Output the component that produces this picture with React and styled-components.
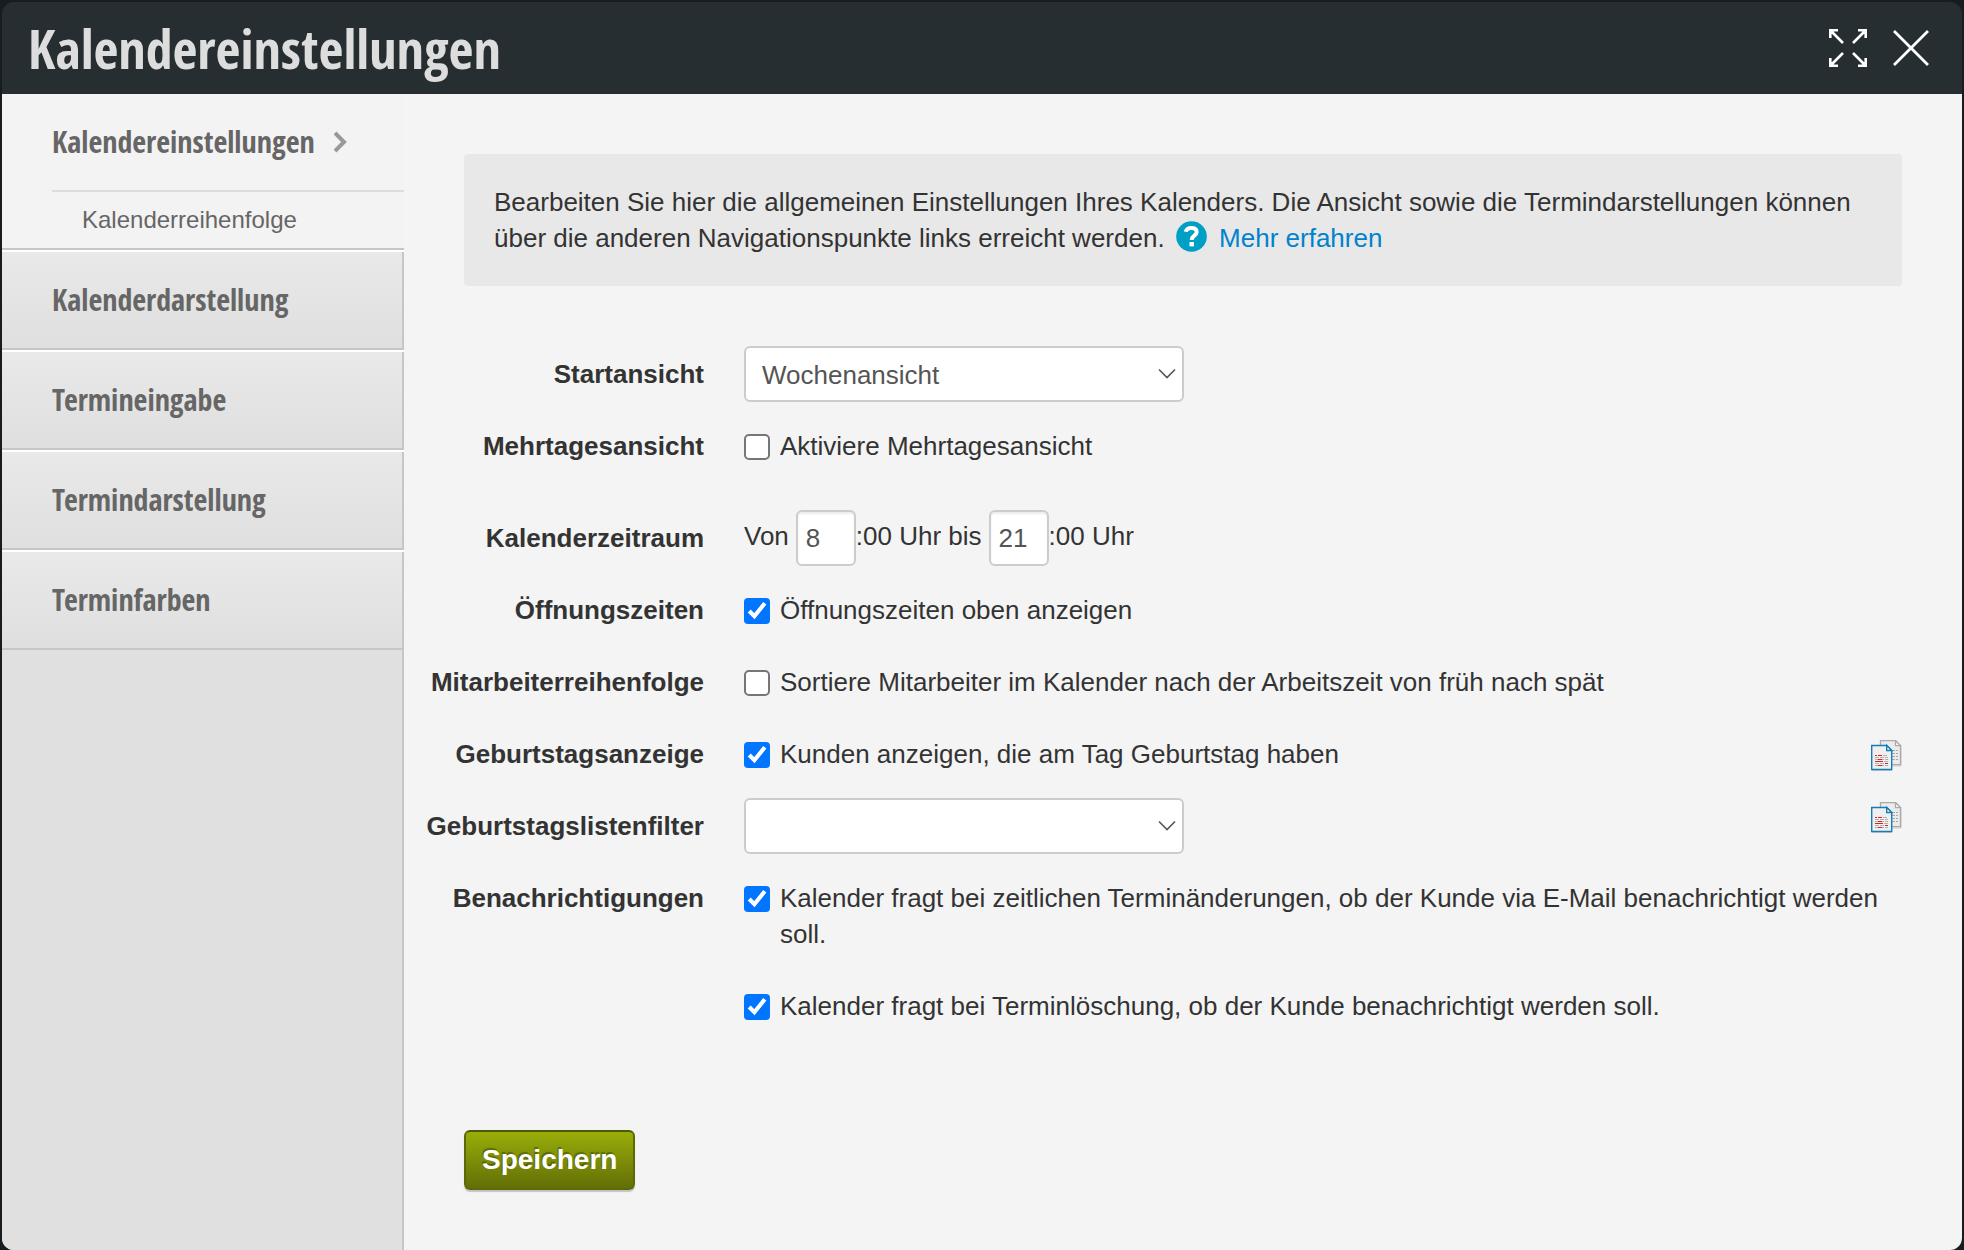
import React from "react";
import styled, { createGlobalStyle, css } from "styled-components";

const GlobalStyle = createGlobalStyle`
  * { box-sizing: border-box; }
  body {
    margin: 0;
    background: #161c1f;
    color: #333;
    font: 26px/36px "Liberation Sans", Arial, sans-serif;
  }
`;

const condensed = css`
  font-family: "Open Sans Condensed", "Liberation Sans Narrow", "Open Sans", sans-serif;
  font-weight: 700;
`;

const Dialog = styled.section`
  display: flex;
  flex-direction: column;
  min-height: 100vh;
  padding: 2px 2px 0;
`;

const Header = styled.header`
  display: flex;
  align-items: center;
  justify-content: space-between;
  height: 92px;
  padding: 0 32px 0 26px;
  border-radius: 12px 12px 0 0;
  background: #262e31;
`;

const Title = styled.h1`
  ${condensed}
  margin: 0;
  color: #ddd;
  font-size: 54px;
  line-height: 92px;
`;

const HeaderActions = styled.div`
  display: flex;
  align-items: center;
  gap: 24px;
`;

const IconButton = styled.button`
  display: flex;
  padding: 0;
  border: 0;
  background: none;
  color: #fff;
  cursor: pointer;
`;

const Body = styled.div`
  display: flex;
  flex: 1;
  overflow: hidden;
  border-radius: 0 0 12px 12px;
  background: #f4f4f4;
`;

const Sidebar = styled.nav`
  display: flex;
  flex-direction: column;
  flex: 0 0 402px;
  background: #e0e0e0;
`;

const ActiveGroup = styled.div`
  padding-left: 50px;
  border-bottom: 2px solid #c6c6c6;
  background: #f3f3f3;
`;

const ActiveLink = styled.a`
  ${condensed}
  display: flex;
  align-items: center;
  gap: 19px;
  height: 98px;
  border-bottom: 2px solid #dcdcdc;
  color: #666;
  font-size: 30px;
  text-decoration: none;
`;

const SubLink = styled.a`
  display: block;
  padding-left: 30px;
  color: #666;
  font-size: 24px;
  line-height: 56px;
  text-decoration: none;
`;

const NavLink = styled.a`
  ${condensed}
  height: 100px;
  padding-left: 50px;
  border-top: 2px solid #fff;
  border-bottom: 2px solid #c6c6c6;
  background: linear-gradient(#e9e9e9, #dfdfdf);
  box-shadow: inset -2px 0 #c6c6c6;
  color: #666;
  font-size: 30px;
  line-height: 96px;
  text-decoration: none;
`;

const SidebarRest = styled.div`
  flex: 1;
  border-right: 2px solid #c6c6c6;
`;

const Main = styled.main`
  flex: 1;
  min-width: 0;
  padding: 60px;
`;

const Info = styled.p`
  margin: 0 0 60px;
  padding: 30px;
  border-radius: 4px;
  background: #e8e8e8;
`;

const HelpIcon = styled.svg`
  margin: 0 5px 0 4px;
  vertical-align: -5px;
`;

const MoreLink = styled.a`
  color: #0082cc;
  text-decoration: none;
`;

const Form = styled.form`
  display: flex;
  flex-direction: column;
  align-items: stretch;
`;

const Rows = styled.div`
  display: flex;
  flex-direction: column;
  gap: 16px;
  margin: 0 0 96px -60px;
`;

const Row = styled.div`
  display: grid;
  grid-template-columns: 340px minmax(0, 1fr) auto;
  align-items: start;
  min-height: 56px;
  margin-bottom: ${(p) => (p.$spaced ? "20px" : "0")};
`;

const RowLabel = styled.label`
  padding: 10px 40px 10px 0;
  font-weight: 700;
  text-align: right;
  white-space: nowrap;
`;

const Options = styled.div`
  display: flex;
  flex-direction: column;
  gap: 36px;
  padding: 10px 0;
`;

const CheckLabel = styled.label`
  display: flex;
  align-items: flex-start;
  gap: 10px;
`;

const Checkbox = styled.input.attrs({ type: "checkbox" })`
  zoom: 2;
  flex: none;
  width: 13px;
  height: 13px;
  margin: 3px 0 0;
  accent-color: #0075ff;
`;

const SelectWrap = styled.div`
  display: grid;
  width: 440px;
  align-items: center;
  color: #555;

  > * { grid-area: 1 / 1; }
  > svg { justify-self: end; margin-right: 8px; pointer-events: none; }
`;

const field = css`
  height: 56px;
  border: 2px solid #ccc;
  border-radius: 6px;
  background: #fff;
  color: #555;
  font: inherit;
`;

const Select = styled.select`
  ${field}
  width: 100%;
  padding: 2px 40px 0 16px;
  appearance: none;
`;

const TimeRange = styled.div`
  display: flex;
  align-items: center;
`;

const HourInput = styled.input`
  ${field}
  width: 60px;
  padding: 0 8px;
  box-shadow: inset 0 2px 2px rgba(0, 0, 0, 0.075);
`;

const TimeText = styled.span`
  padding: 0 ${(p) => (p.$gap ? "7px" : "0")} 4px 0;
`;

const CopyButton = styled(IconButton)`
  margin-top: ${(p) => (p.$raised ? "4px" : "14px")};
`;

const SaveButton = styled.button`
  align-self: flex-start;
  height: 60px;
  padding: 0 16px;
  border: 2px solid #5c6a06;
  border-top-color: #4c5a04;
  border-radius: 6px;
  background: linear-gradient(#99ad09, #636f07);
  box-shadow: 0 2px 1px rgba(0, 0, 0, 0.2);
  color: #fff;
  font: 700 28px/36px "Liberation Sans", Arial, sans-serif;
  text-shadow: -1px -2px 1px rgba(0, 0, 0, 0.3);
  cursor: pointer;
`;

const ExpandIcon = () => (
  <svg width="40" height="40" viewBox="0 0 40 40" fill="none" stroke="currentColor" strokeWidth="2.600" aria-hidden="true">
    <path d="M15 15 2.500 2.500M2.300 10V2.300H10M25 15 37.500 2.500M30 2.300h7.700V10M15 25 2.500 37.500M2.300 30v7.700H10M25 25l12.500 12.500M30 37.700h7.700V30" />
  </svg>
);

const CloseIcon = () => (
  <svg width="38" height="38" viewBox="0 0 38 38" fill="none" stroke="currentColor" strokeWidth="2.800" aria-hidden="true">
    <path d="M2 2 36 36M36 2 2 36" />
  </svg>
);

const Chevron = () => (
  <svg width="14" height="22" viewBox="0 0 14 22" fill="none" stroke="#999" strokeWidth="4" aria-hidden="true">
    <path d="M1 2 10 11 1 20" />
  </svg>
);

const SelectArrow = () => (
  <svg width="18" height="12" viewBox="0 0 18 12" fill="none" stroke="#555" strokeWidth="1.600" aria-hidden="true">
    <path d="M1 1.500 9 9.500 17 1.500" />
  </svg>
);

const Help = () => (
  <HelpIcon width="31" height="31" viewBox="0 0 31 31" aria-hidden="true">
    <circle cx="15.500" cy="15.500" r="15.300" fill="#00a0c6" />
    <path d="M9.800 10.800C10.200 8.300 12.300 6.900 15.500 6.900c3.100 0 5.200 1.500 5.200 4 0 3.900-5 3.700-5 8" fill="none" stroke="#fff" strokeWidth="4" />
    <rect x="13.500" y="21" width="4.400" height="4.400" fill="#fff" />
  </HelpIcon>
);

const CopyIcon = () => (
  <svg width="31" height="31" viewBox="0 0 31 31" aria-hidden="true">
    <path d="M10 26h20V7" fill="none" stroke="#ccc" />
    <path d="M9.500.7h15l5 5v19h-20z" fill="#ebebeb" stroke="#aaa" strokeWidth="1.300" />
    <path d="M24.500.7v5h5z" fill="#fff" stroke="#aaa" strokeWidth="1.300" />
    <path d="M21 10.500h6M21 13.500h6M21 16.500h6M21 19.500h6" stroke="#aaa" strokeDasharray="3 1" />
    <path d="M1 30.500h20" stroke="#ccc" />
    <path d="M.7 5.500h15l5 5v19H.7z" fill="#efefef" stroke="#147db5" strokeWidth="1.400" />
    <path d="M15.700 5.500v5h5z" fill="#fff" stroke="#147db5" strokeWidth="1.400" />
    <path d="M12 15.500h5M4 17.500h13M4 19.500h13M13 21.500h4M4 23.500h9M4 25.500h13" stroke="#b0b0b0" strokeDasharray="4 1" />
    <path d="M4 15.500h2M7 15.500h4M7 19.500h4M4 21.500h8M14 23.500h3M7 25.500h4" stroke="#e02020" />
  </svg>
);

const Check = ({ id, checked, children }) => (
  <CheckLabel>
    <Checkbox id={id} defaultChecked={checked} />
    <span>{children}</span>
  </CheckLabel>
);

export default function App() {
  return (
    <>
      <GlobalStyle />
      <Dialog>
        <Header>
          <Title>Kalendereinstellungen</Title>
          <HeaderActions>
            <IconButton type="button" aria-label="Vollbild"><ExpandIcon /></IconButton>
            <IconButton type="button" aria-label="Schließen"><CloseIcon /></IconButton>
          </HeaderActions>
        </Header>
        <Body>
          <Sidebar>
            <ActiveGroup>
              <ActiveLink href="#kalendereinstellungen">Kalendereinstellungen <Chevron /></ActiveLink>
              <SubLink href="#kalenderreihenfolge">Kalenderreihenfolge</SubLink>
            </ActiveGroup>
            <NavLink href="#kalenderdarstellung">Kalenderdarstellung</NavLink>
            <NavLink href="#termineingabe">Termineingabe</NavLink>
            <NavLink href="#termindarstellung">Termindarstellung</NavLink>
            <NavLink href="#terminfarben">Terminfarben</NavLink>
            <SidebarRest />
          </Sidebar>
          <Main>
            <Info>
              Bearbeiten Sie hier die allgemeinen Einstellungen Ihres Kalenders. Die Ansicht sowie die
              Termindarstellungen können über die anderen Navigationspunkte links erreicht werden.{" "}
              <Help /> <MoreLink href="#hilfe">Mehr erfahren</MoreLink>
            </Info>
            <Form onSubmit={(e) => e.preventDefault()}>
              <Rows>
                <Row>
                  <RowLabel htmlFor="start">Startansicht</RowLabel>
                  <SelectWrap>
                    <Select id="start"><option>Wochenansicht</option></Select>
                    <SelectArrow />
                  </SelectWrap>
                </Row>
                <Row $spaced>
                  <RowLabel htmlFor="multi">Mehrtagesansicht</RowLabel>
                  <Options><Check id="multi">Aktiviere Mehrtagesansicht</Check></Options>
                </Row>
                <Row>
                  <RowLabel htmlFor="from">Kalenderzeitraum</RowLabel>
                  <TimeRange>
                    <TimeText $gap>Von</TimeText>
                    <HourInput id="from" defaultValue="8" />
                    <TimeText $gap>:00 Uhr bis</TimeText>
                    <HourInput aria-label="Bis" defaultValue="21" />
                    <TimeText>:00 Uhr</TimeText>
                  </TimeRange>
                </Row>
                <Row>
                  <RowLabel htmlFor="hours">Öffnungszeiten</RowLabel>
                  <Options><Check id="hours" checked>Öffnungszeiten oben anzeigen</Check></Options>
                </Row>
                <Row>
                  <RowLabel htmlFor="staff">Mitarbeiterreihenfolge</RowLabel>
                  <Options>
                    <Check id="staff">Sortiere Mitarbeiter im Kalender nach der Arbeitszeit von früh nach spät</Check>
                  </Options>
                </Row>
                <Row>
                  <RowLabel htmlFor="birthday">Geburtstagsanzeige</RowLabel>
                  <Options><Check id="birthday" checked>Kunden anzeigen, die am Tag Geburtstag haben</Check></Options>
                  <CopyButton type="button" aria-label="Geburtstagsanzeige übertragen"><CopyIcon /></CopyButton>
                </Row>
                <Row>
                  <RowLabel htmlFor="filter">Geburtstagslistenfilter</RowLabel>
                  <SelectWrap>
                    <Select id="filter"><option></option></Select>
                    <SelectArrow />
                  </SelectWrap>
                  <CopyButton $raised type="button" aria-label="Geburtstagslistenfilter übertragen"><CopyIcon /></CopyButton>
                </Row>
                <Row>
                  <RowLabel htmlFor="notify">Benachrichtigungen</RowLabel>
                  <Options>
                    <Check id="notify" checked>
                      Kalender fragt bei zeitlichen Terminänderungen, ob der Kunde via E-Mail benachrichtigt werden soll.
                    </Check>
                    <Check id="notify-delete" checked>
                      Kalender fragt bei Terminlöschung, ob der Kunde benachrichtigt werden soll.
                    </Check>
                  </Options>
                </Row>
              </Rows>
              <SaveButton type="submit">Speichern</SaveButton>
            </Form>
          </Main>
        </Body>
      </Dialog>
    </>
  );
}
